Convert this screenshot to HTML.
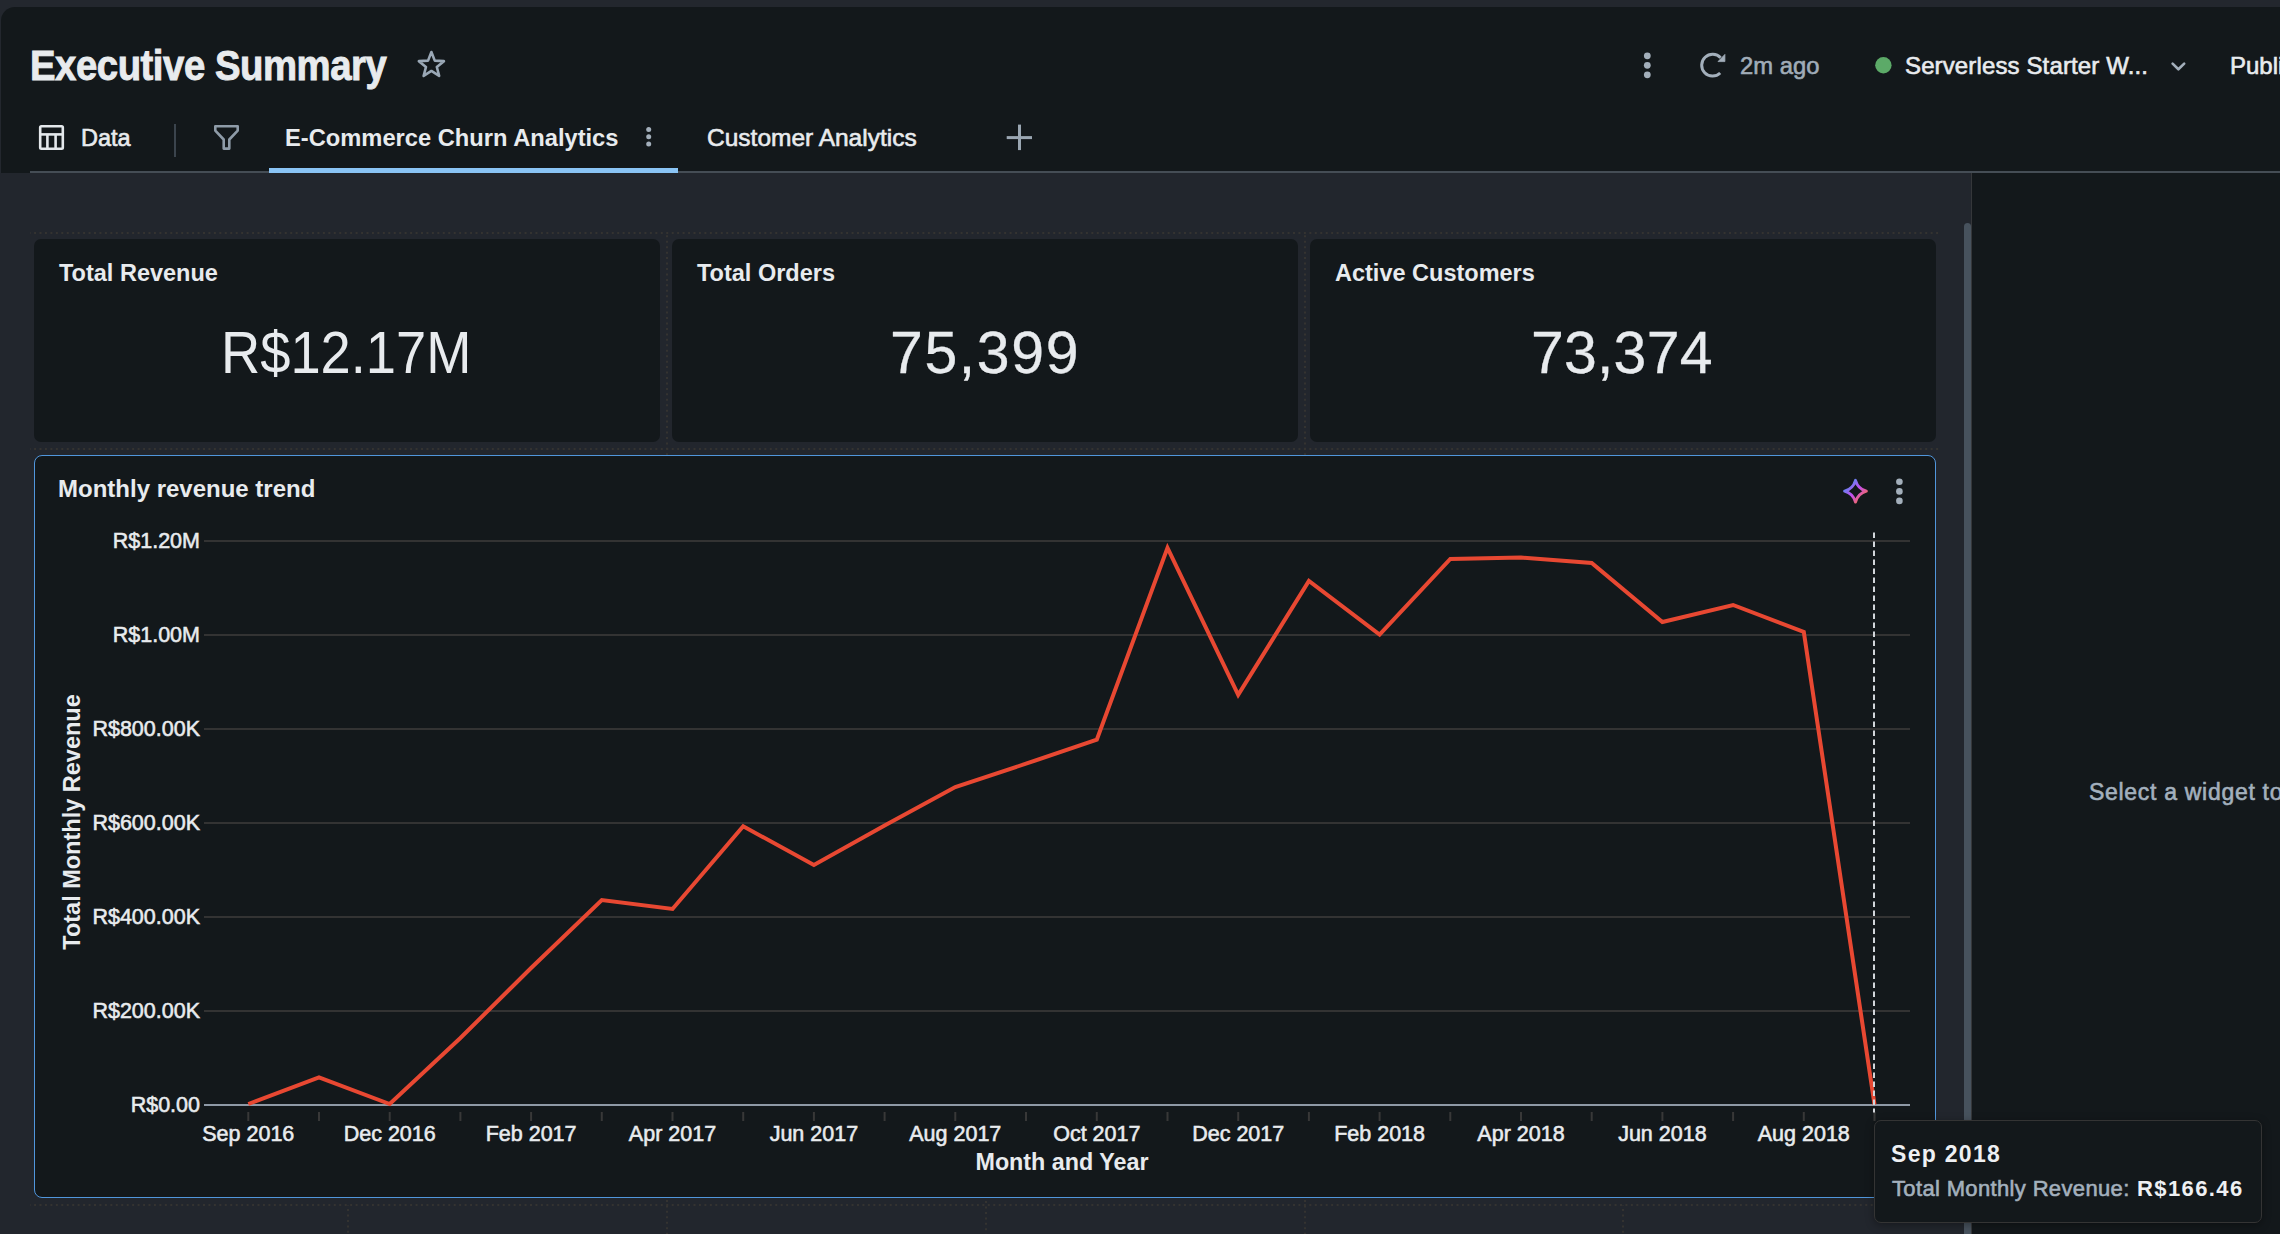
<!DOCTYPE html>
<html><head><meta charset="utf-8">
<style>
*{box-sizing:border-box;margin:0;padding:0}
html,body{width:2280px;height:1234px;overflow:hidden;background:#23272e;font-family:"Liberation Sans",sans-serif;color:#e8ebee}
.abs{position:absolute}
#panel{position:absolute;left:1px;top:7px;width:2279px;height:166px;background:#13181b;border-top-left-radius:14px;overflow:hidden}
#canvas{position:absolute;left:0;top:173px;width:1971px;height:1061px;background:#22262d}
#right{position:absolute;left:1971px;top:173px;width:309px;height:1061px;background:#13181b;border-left:1px solid #35373a;overflow:hidden}
.t{position:absolute;white-space:nowrap;line-height:1;-webkit-text-stroke:0.6px currentColor}
.t[style*="bold"]{-webkit-text-stroke:0}
.card{position:absolute;background:#13181b;border-radius:7px}
</style></head>
<body>
<div id="canvas"></div>
<div id="right"><div class="t" style="left:117px;top:608px;font-size:23px;letter-spacing:0.7px;color:#a3b0bd">Select a widget to configure</div></div>
<div id="panel"></div>

<!-- header -->
<div class="t" style="left:30px;top:45px;font-size:42px;font-weight:bold;letter-spacing:-0.5px;transform:scaleX(0.912);transform-origin:0 0;-webkit-text-stroke:0.9px #e8ebee;color:#e8ebee">Executive Summary</div>
<svg class="abs" style="left:410px;top:45px" width="45" height="40" viewBox="410 45 45 40">
  <path d="M431.40,52.05 L434.75,60.64 L443.95,61.17 L436.82,67.01 L439.16,75.93 L431.40,70.95 L423.64,75.93 L425.98,67.01 L418.85,61.17 L428.05,60.64 Z" fill="none" stroke="#9aa8b6" stroke-width="2.6" stroke-linejoin="round"/>
</svg>

<!-- tabs -->
<div class="abs" style="left:30px;top:171px;width:2250px;height:2px;background:#454d55"></div>
<div class="abs" style="left:269px;top:168px;width:409px;height:5px;background:#8ac4f5"></div>
<svg class="abs" style="left:30px;top:118px" width="220" height="42" viewBox="30 118 220 42">
  <rect x="40.2" y="126.2" width="22.6" height="22.6" rx="1.2" fill="none" stroke="#e4e8ec" stroke-width="2.6"/>
  <line x1="40" y1="134.4" x2="63" y2="134.4" stroke="#e4e8ec" stroke-width="2.6"/>
  <line x1="47.4" y1="134" x2="47.4" y2="149" stroke="#e4e8ec" stroke-width="2.6"/>
  <line x1="55.6" y1="134" x2="55.6" y2="149" stroke="#e4e8ec" stroke-width="2.6"/>
  <line x1="175" y1="124" x2="175" y2="157" stroke="#3b444d" stroke-width="2"/>
  <path d="M215.3,126.3 L237.7,126.3 L237.7,130.6 L229.3,139.5 L229.3,148.6 L223.7,148.6 L223.7,139.5 L215.3,130.6 Z" fill="none" stroke="#8e9ba8" stroke-width="2.6" stroke-linejoin="round"/>
</svg>
<div class="t" style="left:81px;top:127px;font-size:23.5px;color:#e8ebee">Data</div>
<div class="t" style="left:285px;top:127px;font-size:23.7px;font-weight:bold;color:#e8ebee">E-Commerce Churn Analytics</div>
<svg class="abs" style="left:630px;top:118px" width="420" height="42" viewBox="630 118 420 42">
  <circle cx="648.7" cy="129.5" r="2.5" fill="#a3afbb"/>
  <circle cx="648.7" cy="136.7" r="2.5" fill="#a3afbb"/>
  <circle cx="648.7" cy="143.9" r="2.5" fill="#a3afbb"/>
  <line x1="1006.7" y1="137.6" x2="1032" y2="137.6" stroke="#9aa6b2" stroke-width="3"/>
  <line x1="1019.5" y1="124.6" x2="1019.5" y2="150.1" stroke="#9aa6b2" stroke-width="3"/>
</svg>
<div class="t" style="left:707px;top:125.5px;font-size:24.5px;color:#e8ebee">Customer Analytics</div>

<!-- right header -->
<svg class="abs" style="left:1630px;top:45px" width="600" height="40" viewBox="1630 45 600 40">
  <circle cx="1647.3" cy="55.8" r="3.4" fill="#a3afbb"/>
  <circle cx="1647.3" cy="65.3" r="3.4" fill="#a3afbb"/>
  <circle cx="1647.3" cy="74.8" r="3.4" fill="#a3afbb"/>
  <path d="M1720.2,73 A10.9,10.9 0 1 1 1720.6,57.8" fill="none" stroke="#a3afbb" stroke-width="3"/>
  <path d="M1718,61.6 L1724.9,61.6 L1724.9,54.4 Z" fill="#a3afbb" stroke="#a3afbb" stroke-width="0.8" stroke-linejoin="round"/>
  <circle cx="1883.4" cy="65.3" r="8.2" fill="#5caa68"/>
  <path d="M2172.6,63.6 L2178.4,69.3 L2184.2,63.6" fill="none" stroke="#a3afbb" stroke-width="2.6" stroke-linecap="round" stroke-linejoin="round"/>
</svg>
<div class="t" style="left:1740px;top:54px;font-size:23.8px;color:#a0acb8">2m ago</div>
<div class="t" style="left:1905px;top:54px;font-size:24px;letter-spacing:0.13px;color:#e8ebee">Serverless Starter W...</div>
<div class="t" style="left:2230px;top:54px;font-size:24px;color:#e8ebee">Publish</div>

<!-- canvas grid dotted guides -->
<svg class="abs" style="left:0;top:173px" width="1971" height="1061" viewBox="0 173 1971 1061">
  <g stroke="#343331" stroke-width="2" stroke-dasharray="2,3.45" stroke-dashoffset="1.4">
    <line x1="30" y1="233" x2="1940" y2="233"/>
    <line x1="30" y1="449" x2="1940" y2="449"/>
    <line x1="30" y1="1205" x2="1940" y2="1205"/>
    <line x1="667" y1="233" x2="667" y2="1234" stroke-dashoffset="3.15"/>
    <line x1="1305" y1="233" x2="1305" y2="1234" stroke-dashoffset="3.15"/>
    <line x1="348" y1="1205" x2="348" y2="1234"/>
    <line x1="986" y1="1197" x2="986" y2="1234"/>
    <line x1="1623" y1="1205" x2="1623" y2="1234"/>
  </g>
</svg>
<div class="abs" style="left:1964px;top:223px;width:7px;height:1011px;background:#47525d;border-radius:3.5px 3.5px 0 0"></div>

<!-- KPI cards -->
<div class="card" style="left:34px;top:239px;width:626px;height:203px"></div>
<div class="card" style="left:672px;top:239px;width:626px;height:203px"></div>
<div class="card" style="left:1310px;top:239px;width:626px;height:203px"></div>
<div class="t" style="left:59px;top:262px;font-size:23.5px;font-weight:bold">Total Revenue</div>
<div class="t" style="left:697px;top:262px;font-size:23.5px;font-weight:bold">Total Orders</div>
<div class="t" style="left:1335px;top:262px;font-size:23.5px;font-weight:bold">Active Customers</div>
<div class="t" style="left:221px;top:324px;font-size:59px;-webkit-text-stroke:0;transform:scaleX(0.92);transform-origin:0 0">R$12.17M</div>
<div class="t" style="left:890px;top:324px;font-size:59px;letter-spacing:1.6px;-webkit-text-stroke:0.3px currentColor">75,399</div>
<div class="t" style="left:1531px;top:324px;font-size:59px;letter-spacing:0.2px;-webkit-text-stroke:0.3px currentColor">73,374</div>

<!-- chart card -->
<div class="card" style="left:34px;top:455px;width:1902px;height:743px;border:1.5px solid #5096dc;border-radius:8px"></div>
<div class="t" style="left:58px;top:477px;font-size:24px;font-weight:bold">Monthly revenue trend</div>
<svg class="abs" style="left:1835px;top:470px" width="80" height="42" viewBox="1835 470 80 42">
  <defs><linearGradient id="sg" x1="1847" y1="483" x2="1864" y2="500" gradientUnits="userSpaceOnUse">
    <stop offset="0" stop-color="#4f8ff2"/><stop offset="0.5" stop-color="#c24ef0"/><stop offset="1" stop-color="#ff7048"/></linearGradient></defs>
  <path d="M1855.50,480.30 C1857.20,486.30 1860.40,489.50 1866.40,491.20 C1860.40,492.90 1857.20,496.10 1855.50,502.10 C1853.80,496.10 1850.60,492.90 1844.60,491.20 C1850.60,489.50 1853.80,486.30 1855.50,480.30 Z" fill="none" stroke="url(#sg)" stroke-width="2.9" stroke-linejoin="round"/>
  <circle cx="1899.4" cy="481.8" r="3.3" fill="#a3afbb"/>
  <circle cx="1899.4" cy="491.4" r="3.3" fill="#a3afbb"/>
  <circle cx="1899.4" cy="500.9" r="3.3" fill="#a3afbb"/>
</svg>

<svg class="abs" style="left:0;top:0" width="2280" height="1234">
<line x1="204" y1="541" x2="1910" y2="541" stroke="#333333" stroke-width="2"/>
<line x1="204" y1="635" x2="1910" y2="635" stroke="#333333" stroke-width="2"/>
<line x1="204" y1="729" x2="1910" y2="729" stroke="#333333" stroke-width="2"/>
<line x1="204" y1="823" x2="1910" y2="823" stroke="#333333" stroke-width="2"/>
<line x1="204" y1="917" x2="1910" y2="917" stroke="#333333" stroke-width="2"/>
<line x1="204" y1="1011" x2="1910" y2="1011" stroke="#333333" stroke-width="2"/>
<line x1="204" y1="1105" x2="1910" y2="1105" stroke="#8e99a6" stroke-width="2"/>
<line x1="248.3" y1="1112" x2="248.3" y2="1121" stroke="#383838" stroke-width="2"/>
<line x1="319.0" y1="1112" x2="319.0" y2="1121" stroke="#383838" stroke-width="2"/>
<line x1="389.7" y1="1112" x2="389.7" y2="1121" stroke="#383838" stroke-width="2"/>
<line x1="460.4" y1="1112" x2="460.4" y2="1121" stroke="#383838" stroke-width="2"/>
<line x1="531.1" y1="1112" x2="531.1" y2="1121" stroke="#383838" stroke-width="2"/>
<line x1="601.8" y1="1112" x2="601.8" y2="1121" stroke="#383838" stroke-width="2"/>
<line x1="672.5" y1="1112" x2="672.5" y2="1121" stroke="#383838" stroke-width="2"/>
<line x1="743.2" y1="1112" x2="743.2" y2="1121" stroke="#383838" stroke-width="2"/>
<line x1="813.9" y1="1112" x2="813.9" y2="1121" stroke="#383838" stroke-width="2"/>
<line x1="884.6" y1="1112" x2="884.6" y2="1121" stroke="#383838" stroke-width="2"/>
<line x1="955.3" y1="1112" x2="955.3" y2="1121" stroke="#383838" stroke-width="2"/>
<line x1="1026.0" y1="1112" x2="1026.0" y2="1121" stroke="#383838" stroke-width="2"/>
<line x1="1096.8" y1="1112" x2="1096.8" y2="1121" stroke="#383838" stroke-width="2"/>
<line x1="1167.5" y1="1112" x2="1167.5" y2="1121" stroke="#383838" stroke-width="2"/>
<line x1="1238.2" y1="1112" x2="1238.2" y2="1121" stroke="#383838" stroke-width="2"/>
<line x1="1308.9" y1="1112" x2="1308.9" y2="1121" stroke="#383838" stroke-width="2"/>
<line x1="1379.6" y1="1112" x2="1379.6" y2="1121" stroke="#383838" stroke-width="2"/>
<line x1="1450.3" y1="1112" x2="1450.3" y2="1121" stroke="#383838" stroke-width="2"/>
<line x1="1521.0" y1="1112" x2="1521.0" y2="1121" stroke="#383838" stroke-width="2"/>
<line x1="1591.7" y1="1112" x2="1591.7" y2="1121" stroke="#383838" stroke-width="2"/>
<line x1="1662.4" y1="1112" x2="1662.4" y2="1121" stroke="#383838" stroke-width="2"/>
<line x1="1733.1" y1="1112" x2="1733.1" y2="1121" stroke="#383838" stroke-width="2"/>
<line x1="1803.8" y1="1112" x2="1803.8" y2="1121" stroke="#383838" stroke-width="2"/>
<line x1="1874.5" y1="1112" x2="1874.5" y2="1121" stroke="#383838" stroke-width="2"/>
<g font-family="Liberation Sans" font-size="21.5" fill="#e8ebee" stroke="#e8ebee" stroke-width="0.55" text-anchor="end">
<text x="200" y="548.2">R$1.20M</text>
<text x="200" y="642.2">R$1.00M</text>
<text x="200" y="736.2">R$800.00K</text>
<text x="200" y="830.2">R$600.00K</text>
<text x="200" y="924.2">R$400.00K</text>
<text x="200" y="1018.2">R$200.00K</text>
<text x="200" y="1112.2">R$0.00</text>
</g><g font-family="Liberation Sans" font-size="21.5" fill="#e8ebee" stroke="#e8ebee" stroke-width="0.55" text-anchor="middle">
<text x="248.3" y="1141.2">Sep 2016</text>
<text x="389.7" y="1141.2">Dec 2016</text>
<text x="531.1" y="1141.2">Feb 2017</text>
<text x="672.5" y="1141.2">Apr 2017</text>
<text x="813.9" y="1141.2">Jun 2017</text>
<text x="955.3" y="1141.2">Aug 2017</text>
<text x="1096.8" y="1141.2">Oct 2017</text>
<text x="1238.2" y="1141.2">Dec 2017</text>
<text x="1379.6" y="1141.2">Feb 2018</text>
<text x="1521.0" y="1141.2">Apr 2018</text>
<text x="1662.4" y="1141.2">Jun 2018</text>
<text x="1803.8" y="1141.2">Aug 2018</text>
</g>
<text x="1062" y="1170.4" font-family="Liberation Sans" font-size="23.3" font-weight="bold" fill="#e8ebee" text-anchor="middle">Month and Year</text>
<text transform="translate(79.7,822) rotate(-90)" font-family="Liberation Sans" font-size="23.5" font-weight="bold" fill="#e8ebee" text-anchor="middle">Total Monthly Revenue</text>
<polyline points="248.3,1104.0 319.0,1077.5 389.7,1104.0 460.4,1038.0 531.1,968.0 601.8,900.0 672.5,909.0 743.2,826.3 813.9,865.0 884.6,825.6 955.3,787.0 1026.0,763.7 1096.8,739.7 1167.5,547.8 1238.2,694.8 1308.9,581.0 1379.6,634.5 1450.3,558.9 1521.0,557.5 1591.7,562.9 1662.4,622.0 1733.1,605.0 1803.8,632.0 1874.5,1104.5" fill="none" stroke="#e84832" stroke-width="4" stroke-linejoin="miter" stroke-miterlimit="10"/>
<line x1="1874" y1="532.5" x2="1874" y2="1112.5" stroke="#d2d6db" stroke-width="2" stroke-dasharray="5.5,3.5"/>
</svg>

<!-- tooltip -->
<div class="abs" style="left:1874px;top:1120px;width:388px;height:103px;background:#13181b;border:1.5px solid #343434;border-radius:7px;box-shadow:0 2px 8px rgba(0,0,0,0.35)"></div>
<div class="t" style="left:1891px;top:1143px;font-size:23px;letter-spacing:1.3px;font-weight:bold;color:#eef0f3">Sep 2018</div>
<div class="t" style="left:1892px;top:1178px;font-size:22px;letter-spacing:0.35px;color:#a3b0bd">Total Monthly Revenue:</div>
<div class="t" style="left:2137px;top:1178px;font-size:22px;letter-spacing:1.4px;font-weight:bold;color:#eef0f3">R$166.46</div>
</body></html>
